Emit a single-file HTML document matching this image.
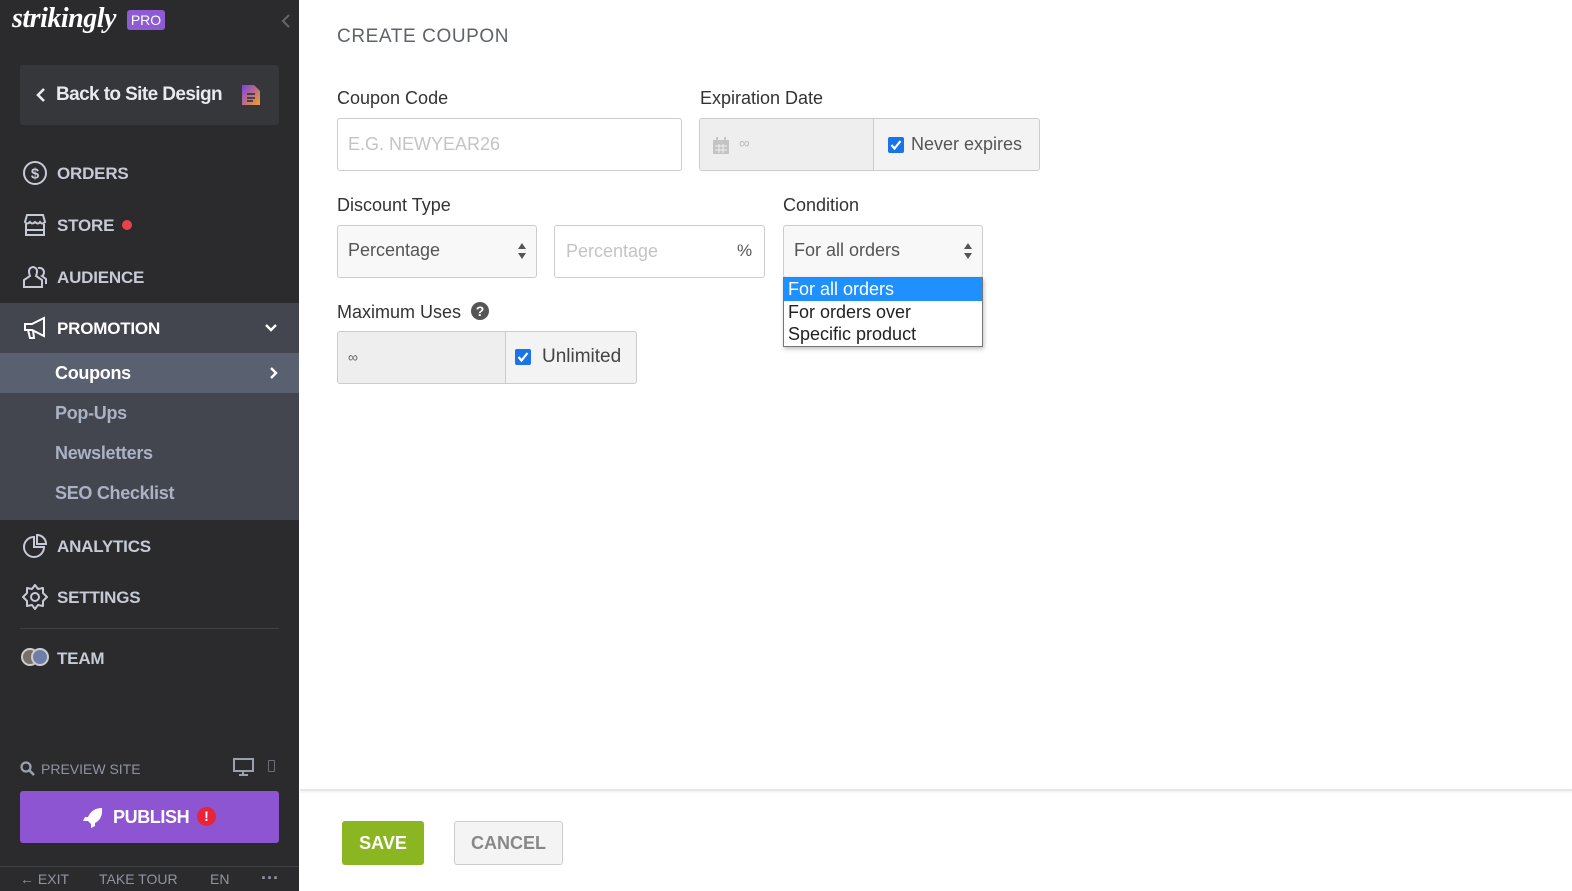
<!DOCTYPE html>
<html><head><meta charset="utf-8"><style>
*{box-sizing:border-box;margin:0;padding:0}
body{width:1572px;height:891px;overflow:hidden;background:#fff;font-family:"Liberation Sans",sans-serif;position:relative}
.sb{position:absolute;left:0;top:0;width:299px;height:891px;background:#2b2b2e}
.abs{position:absolute}
.nav{position:absolute;left:57px;color:#c5cad6;font-weight:bold;font-size:17px;letter-spacing:-0.2px}
.ic{position:absolute;left:22px}
.sub{position:absolute;left:55px;color:#aab2c4;font-weight:bold;font-size:18px;letter-spacing:-0.3px}
.lbl{position:absolute;font-size:18px;color:#333}
.box{position:absolute;border:1px solid #ccc;border-radius:3px}
.ph{position:absolute;font-size:18px;color:#bbb}
</style></head><body>
<div class="sb">
  <div class="abs" style="left:12px;top:3px;color:#fff;font-style:italic;font-weight:bold;font-size:28px;font-family:'Liberation Serif',serif;letter-spacing:-0.5px">strikingly</div>
  <div class="abs" style="left:127px;top:10px;width:38px;height:20px;background:#8e5bd3;border-radius:3px;color:#fff;font-size:14px;text-align:center;line-height:20px">PRO</div>
  <svg class="abs" style="left:281px;top:13px" width="10" height="16"><path d="M8 2 L2 8 L8 14" stroke="#666" stroke-width="2" fill="none"/></svg>
  <div class="abs" style="left:20px;top:65px;width:259px;height:60px;background:#36373b;border-radius:3px"></div>
  <svg class="abs" style="left:35px;top:87px" width="12" height="16"><path d="M9 2 L3 8 L9 14" stroke="#e8eaf0" stroke-width="2.6" fill="none"/></svg>
  <div class="abs" style="left:56px;top:84px;color:#e8eaf0;font-weight:bold;font-size:19px;letter-spacing:-0.6px">Back to Site Design</div>
  <svg class="abs" style="left:242px;top:85px" width="18" height="20"><defs><linearGradient id="g" x1="0" y1="0" x2="1" y2="1"><stop offset="0" stop-color="#7b3fe4"/><stop offset="1" stop-color="#f2a02a"/></linearGradient></defs><path d="M0 0 H12 L18 6 V20 H0Z" fill="url(#g)"/><path d="M5 9h8M5 13h8M5 16h6" stroke="#2b2b2e" stroke-width="1.4"/></svg>

  <svg class="ic" style="top:160px" width="26" height="26"><circle cx="13" cy="13" r="11" stroke="#c5cad6" stroke-width="2" fill="none"/><text x="13" y="18.5" font-size="15" font-weight="bold" text-anchor="middle" fill="#c5cad6" font-family="Liberation Sans">$</text></svg>
  <div class="nav" style="top:164px">ORDERS</div>
  <svg class="ic" style="top:213px" width="26" height="24"><path d="M3 9 L5 2 H21 L23 9 Q20 12 18 9 Q16 12 13 9 Q10 12 8 9 Q5 12 3 9Z M4 11 V22 H22 V11 M4 17 H22" stroke="#c5cad6" stroke-width="2" fill="none"/></svg>
  <div class="nav" style="top:216px">STORE</div>
  <div class="abs" style="left:122px;top:220px;width:10px;height:10px;border-radius:50%;background:#e8434b"></div>
  <svg class="ic" style="top:264px" width="26" height="26"><path d="M8 12 Q5 4 11 3 Q17 4 14 12 L20 16 V23 H2 V16Z M16 4 Q21 3 22 8 Q22 11 20 12 L24 15 V20" stroke="#c5cad6" stroke-width="2" fill="none"/></svg>
  <div class="nav" style="top:268px">AUDIENCE</div>

  <div class="abs" style="left:0;top:303px;width:299px;height:217px;background:#43464f"></div>
  <svg class="ic" style="top:315px" width="26" height="26"><path d="M3 9 H10 L22 3 V21 L10 15 H3Z M6 15 L8 23 H12 L11 15" stroke="#fff" stroke-width="2" fill="none"/></svg>
  <div class="nav" style="top:319px;color:#fff">PROMOTION</div>
  <svg class="abs" style="left:264px;top:323px" width="14" height="10"><path d="M2 2 L7 7 L12 2" stroke="#fff" stroke-width="2.4" fill="none"/></svg>
  <div class="abs" style="left:0;top:353px;width:299px;height:40px;background:#596070"></div>
  <div class="sub" style="top:363px;color:#fff">Coupons</div>
  <svg class="abs" style="left:269px;top:366px" width="10" height="14"><path d="M2 2 L7 7 L2 12" stroke="#fff" stroke-width="2.4" fill="none"/></svg>
  <div class="sub" style="top:403px">Pop-Ups</div>
  <div class="sub" style="top:443px">Newsletters</div>
  <div class="sub" style="top:483px">SEO Checklist</div>

  <svg class="ic" style="top:533px" width="26" height="26"><path d="M12 4 A10 10 0 1 0 22 14 H12Z" stroke="#c5cad6" stroke-width="2" fill="none"/><path d="M15 2 A9 9 0 0 1 24 11 H15Z" stroke="#c5cad6" stroke-width="2" fill="none"/></svg>
  <div class="nav" style="top:537px">ANALYTICS</div>
  <svg class="ic" style="top:584px" width="26" height="26"><path d="M13 1 L16 5 L21 4 L21 9 L25 13 L21 17 L21 22 L16 21 L13 25 L10 21 L5 22 L5 17 L1 13 L5 9 L5 4 L10 5Z" stroke="#c5cad6" stroke-width="2" fill="none" stroke-linejoin="round"/><circle cx="13" cy="13" r="4" stroke="#c5cad6" stroke-width="2" fill="none"/></svg>
  <div class="nav" style="top:588px">SETTINGS</div>
  <div class="abs" style="left:20px;top:628px;width:259px;height:1px;background:#3e3f44"></div>
  <div class="abs" style="left:21px;top:648px;width:18px;height:18px;border-radius:50%;background:#776f68;border:2px solid #ccc"></div>
  <div class="abs" style="left:31px;top:648px;width:18px;height:18px;border-radius:50%;background:#6d7fa8;border:2px solid #ccc"></div>
  <div class="nav" style="top:649px">TEAM</div>

  <svg class="abs" style="left:20px;top:761px" width="16" height="16"><circle cx="6" cy="6" r="4.5" stroke="#9aa0ad" stroke-width="2.2" fill="none"/><path d="M9.5 9.5 L14 14" stroke="#9aa0ad" stroke-width="2.6"/></svg>
  <div class="abs" style="left:41px;top:761px;color:#8f94a0;font-size:14px">PREVIEW SITE</div>
  <svg class="abs" style="left:233px;top:758px" width="22" height="18"><rect x="1" y="1" width="19" height="12" stroke="#9aa0ad" stroke-width="2" fill="none"/><path d="M10 13v3M6 17h9" stroke="#9aa0ad" stroke-width="2"/></svg>
  <div class="abs" style="left:268px;top:760px;width:7px;height:12px;border:1.5px solid #6a6e78;border-radius:1px"></div>
  <div class="abs" style="left:20px;top:791px;width:259px;height:52px;background:#8e55d2;border-radius:3px"></div>
  <svg class="abs" style="left:82px;top:807px" width="22" height="22"><path d="M20 1 Q10 1 6 10 L3 10 L1 14 L6 14 L9 17 L9 21 L13 19 L13 16 Q21 12 20 1Z" fill="#fff"/></svg>
  <div class="abs" style="left:113px;top:807px;color:#fff;font-weight:bold;font-size:18px;letter-spacing:-0.4px">PUBLISH</div>
  <div class="abs" style="left:197px;top:807px;width:19px;height:19px;border-radius:50%;background:#e8233a;color:#fff;font-weight:bold;font-size:14px;text-align:center;line-height:19px">!</div>
  <div class="abs" style="left:0;top:866px;width:299px;height:1px;background:#3e3f44"></div>
  <div class="abs" style="left:20px;top:871px;color:#8f94a0;font-size:14px">&#8592; EXIT</div>
  <div class="abs" style="left:99px;top:871px;color:#8f94a0;font-size:14px">TAKE TOUR</div>
  <div class="abs" style="left:210px;top:871px;color:#8f94a0;font-size:14px">EN</div>
  <div class="abs" style="left:261px;top:868px;color:#8f94a0;font-size:18px;font-weight:bold">&middot;&middot;&middot;</div>
</div>

<div class="abs" style="left:337px;top:26px;font-size:19px;color:#5f6368;letter-spacing:0.6px">CREATE COUPON</div>

<div class="lbl" style="left:337px;top:88px">Coupon Code</div>
<div class="box" style="left:337px;top:118px;width:345px;height:53px"></div>
<div class="ph" style="left:348px;top:134px;color:#c4c4c4">E.G. NEWYEAR26</div>

<div class="lbl" style="left:700px;top:88px">Expiration Date</div>
<div class="box" style="left:699px;top:118px;width:341px;height:53px;background:#f3f3f3;overflow:hidden"><div style="width:174px;height:100%;background:#eee;border-right:1px solid #ccc"></div></div>
<svg class="abs" style="left:713px;top:137px" width="16" height="17"><rect x="0" y="3" width="16" height="14" fill="#c4c4c4"/><rect x="3" y="0" width="2" height="4" fill="#c4c4c4"/><rect x="11" y="0" width="2" height="4" fill="#c4c4c4"/><path d="M2 9h12M2 13h12M6 7v9M10 7v9" stroke="#eee" stroke-width="1"/></svg>
<div class="abs" style="left:739px;top:135px;color:#bbb;font-size:15px">&#8734;</div>
<div class="abs" style="left:888px;top:137px;width:16px;height:16px;background:#1a73e8;border-radius:2px"></div>
<svg class="abs" style="left:888px;top:137px" width="16" height="16"><path d="M3.5 8 L6.5 11.5 L12.5 4" stroke="#fff" stroke-width="2.2" fill="none"/></svg>
<div class="abs" style="left:911px;top:134px;font-size:18px;color:#555">Never expires</div>

<div class="lbl" style="left:337px;top:195px">Discount Type</div>
<div class="box" style="left:337px;top:225px;width:200px;height:53px;background:#f8f8f8"></div>
<div class="abs" style="left:348px;top:240px;font-size:18px;color:#555">Percentage</div>
<svg class="abs" style="left:517px;top:242px" width="10" height="18"><path d="M1 7 L5 1 L9 7Z M1 11 L5 17 L9 11Z" fill="#555"/></svg>
<div class="box" style="left:554px;top:225px;width:211px;height:53px"></div>
<div class="ph" style="left:566px;top:241px;color:#c4c4c4">Percentage</div>
<div class="abs" style="left:737px;top:241px;font-size:17px;color:#555">%</div>

<div class="lbl" style="left:783px;top:195px">Condition</div>
<div class="box" style="left:783px;top:225px;width:200px;height:53px;background:#f8f8f8"></div>
<div class="abs" style="left:794px;top:240px;font-size:18px;color:#555">For all orders</div>
<svg class="abs" style="left:963px;top:242px" width="10" height="18"><path d="M1 7 L5 1 L9 7Z M1 11 L5 17 L9 11Z" fill="#555"/></svg>
<div class="abs" style="left:783px;top:277px;width:200px;height:70px;background:#fff;border:1px solid #767676;box-shadow:1px 2px 4px rgba(0,0,0,.25)">
  <div style="height:23px;background:#1e90ff;color:#fff;font-size:18px;padding-left:4px;line-height:22px">For all orders</div>
  <div style="height:22px;color:#222;font-size:18px;padding-left:4px;line-height:22px">For orders over</div>
  <div style="height:22px;color:#222;font-size:18px;padding-left:4px;line-height:22px">Specific product</div>
</div>

<div class="lbl" style="left:337px;top:302px">Maximum Uses</div>
<div class="abs" style="left:471px;top:302px;width:18px;height:18px;border-radius:50%;background:#555;color:#fff;font-weight:bold;font-size:14px;text-align:center;line-height:18px">?</div>
<div class="box" style="left:337px;top:331px;width:300px;height:53px;background:#f3f3f3;overflow:hidden"><div style="width:168px;height:100%;background:#eee;border-right:1px solid #ccc"></div></div>
<div class="abs" style="left:348px;top:349px;color:#666;font-size:14px">&#8734;</div>
<div class="abs" style="left:515px;top:349px;width:16px;height:16px;background:#1a73e8;border-radius:2px"></div>
<svg class="abs" style="left:515px;top:349px" width="16" height="16"><path d="M3.5 8 L6.5 11.5 L12.5 4" stroke="#fff" stroke-width="2.2" fill="none"/></svg>
<div class="abs" style="left:542px;top:346px;font-size:19px;color:#444">Unlimited</div>

<div class="abs" style="left:300px;top:789px;width:1272px;height:2px;background:#e6e6e6;box-shadow:0 1px 2px rgba(0,0,0,.08)"></div>
<div class="abs" style="left:342px;top:821px;width:82px;height:44px;background:#8bb521;border-radius:3px;color:#fff;font-weight:bold;font-size:18px;text-align:center;line-height:44px">SAVE</div>
<div class="abs" style="left:454px;top:821px;width:109px;height:44px;background:#f4f4f4;border:1px solid #ccc;border-radius:3px;color:#888;font-weight:bold;font-size:18px;text-align:center;line-height:42px">CANCEL</div>
</body></html>
